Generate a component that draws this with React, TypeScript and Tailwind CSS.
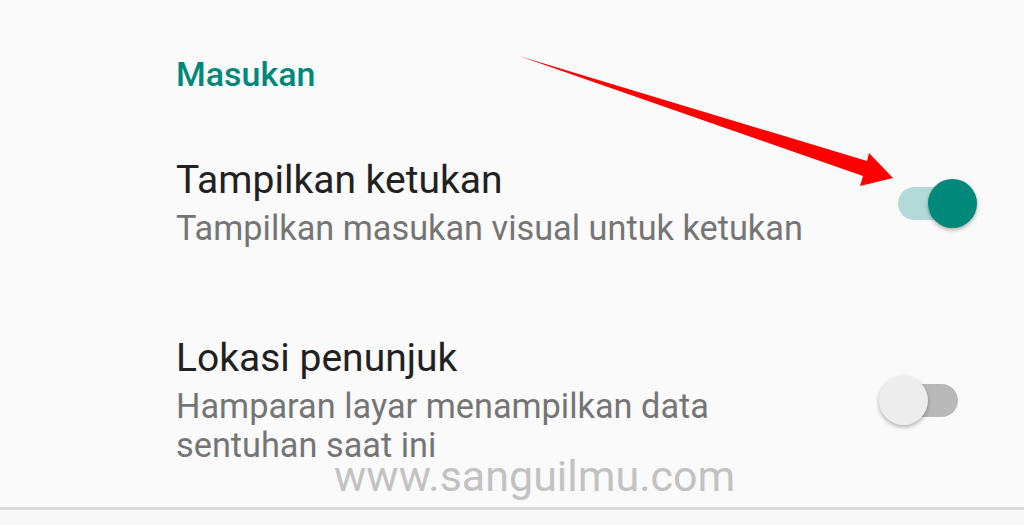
import React from "react";

type SwitchProps = { on: boolean };

const Switch: React.FC<SwitchProps> = ({ on }) => (
  <div className="relative w-[98px] h-[49px] shrink-0">
    <div
      className={
        "absolute left-[19px] top-[8px] w-[60px] h-[33px] rounded-full " +
        (on ? "bg-[#b2dbd8]" : "bg-[#b9b9b9]")
      }
    />
    <div
      className={
        "absolute top-0 w-[49px] h-[49px] rounded-full shadow-[0_2px_4px_rgba(0,0,0,0.3)] " +
        (on ? "left-[49px] bg-[#00897b]" : "left-0 bg-[#ededed]")
      }
    />
  </div>
);

type RowProps = {
  title: string;
  summary: string;
  on: boolean;
};

const PrefRow: React.FC<RowProps> = ({ title, summary, on }) => (
  <div className="flex items-center pl-[176px] pr-[47px] py-[44px]">
    <div className="w-[660px] flex flex-col">
      <div className="text-[39px] leading-[44px] text-[#212121]">{title}</div>
      <div className="mt-[7px] text-[34.3px] leading-[39px] text-[#757575]">
        {summary}
      </div>
    </div>
    <div className="flex-1" />
    <Switch on={on} />
  </div>
);

export default function App() {
  return (
    <div
      className="w-[1024px] h-[525px] flex flex-col bg-[#fafafa] overflow-hidden"
      style={{ fontFamily: "Roboto, 'Noto Sans', sans-serif" }}
    >
      <div className="relative h-[507px] shrink-0">
        {/* Category header */}
        <div className="pl-[176px] pt-[54px] mb-[20px] text-[34px] leading-[40px] font-medium text-[#00897b]">
          Masukan
        </div>

        <PrefRow
          title="Tampilkan ketukan"
          summary="Tampilkan masukan visual untuk ketukan"
          on={true}
        />
        <PrefRow
          title="Lokasi penunjuk"
          summary="Hamparan layar menampilkan data sentuhan saat ini"
          on={false}
        />

        {/* Watermark */}
        <div className="absolute left-[334px] top-[451px] text-[43px] leading-[50px] text-[#c2c2c2] pointer-events-none">
          www.sanguilmu.com
        </div>

        {/* Red annotation arrow */}
        <svg
          className="absolute inset-0 pointer-events-none"
          width="1024"
          height="507"
          viewBox="0 0 1024 507"
        >
          <polygon
            points="519,56 867,161 869,153 893,178 860,186 863,176"
            fill="#ff0000"
          />
        </svg>
      </div>
      <div className="h-[3px] bg-[#dadada] shrink-0" />
      <div className="flex-1 bg-[#f8f8f8]" />
    </div>
  );
}
